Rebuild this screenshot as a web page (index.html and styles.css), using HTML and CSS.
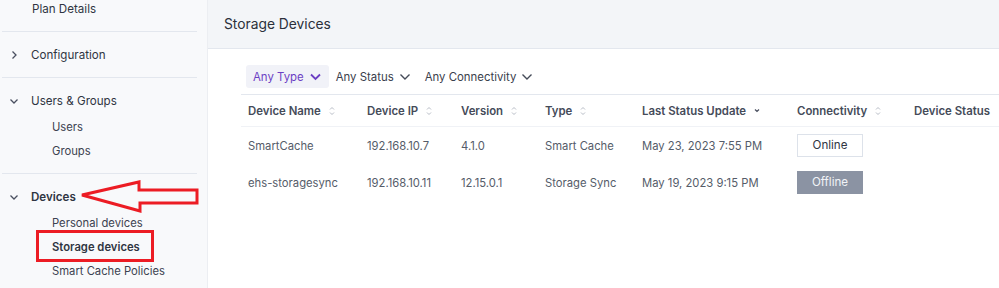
FILE: index.html
```html
<!DOCTYPE html>
<html lang="en">
<head>
    <meta charset="UTF-8">
    <title>Storage Devices</title>
    <link rel="stylesheet" href="styles.css">
</head>
<body>
    <aside class="sidebar">
        <div class="section first">
            <div class="item">Plan Details</div>
        </div>
        <div class="section">
            <div class="heading">
                <svg class="caret" viewBox="0 0 10 10"><path d="M3.5 1.5 7 5 3.5 8.5" /></svg>
                Configuration
            </div>
        </div>
        <div class="section">
            <div class="heading">
                <svg class="caret" viewBox="0 0 10 10"><path d="M1.5 3.5 5 7 8.5 3.5" /></svg>
                Users &amp; Groups
            </div>
            <div class="sub">Users</div>
            <div class="sub">Groups</div>
        </div>
        <div class="section last">
            <div class="heading strong">
                <svg class="caret" viewBox="0 0 10 10"><path d="M1.5 3.5 5 7 8.5 3.5" /></svg>
                Devices
            </div>
            <div class="sub">Personal devices</div>
            <div class="sub strong">Storage devices</div>
            <div class="sub">Smart Cache Policies</div>
        </div>
    </aside>

    <main class="main">
        <header class="page-header">
            <h1>Storage Devices</h1>
        </header>

        <div class="filters">
            <button class="filter active">Any Type
                <svg class="chev" viewBox="0 0 12 8"><path d="M1.5 1.5 6 6 10.5 1.5" /></svg>
            </button>
            <button class="filter">Any Status
                <svg class="chev" viewBox="0 0 12 8"><path d="M1.5 1.5 6 6 10.5 1.5" /></svg>
            </button>
            <button class="filter">Any Connectivity
                <svg class="chev" viewBox="0 0 12 8"><path d="M1.5 1.5 6 6 10.5 1.5" /></svg>
            </button>
        </div>

        <div class="table">
            <div class="row head">
                <div class="cell">Device Name <svg class="sort" viewBox="0 0 6 10"><path d="M1 3.5 3 1.5 5 3.5M1 6.5 3 8.5 5 6.5" /></svg></div>
                <div class="cell">Device IP <svg class="sort" viewBox="0 0 6 10"><path d="M1 3.5 3 1.5 5 3.5M1 6.5 3 8.5 5 6.5" /></svg></div>
                <div class="cell">Version <svg class="sort" viewBox="0 0 6 10"><path d="M1 3.5 3 1.5 5 3.5M1 6.5 3 8.5 5 6.5" /></svg></div>
                <div class="cell">Type <svg class="sort" viewBox="0 0 6 10"><path d="M1 3.5 3 1.5 5 3.5M1 6.5 3 8.5 5 6.5" /></svg></div>
                <div class="cell">Last Status Update <svg class="sort on" viewBox="0 0 6 10"><path d="M1 3.5 3 5.5 5 3.5" /></svg></div>
                <div class="cell">Connectivity <svg class="sort" viewBox="0 0 6 10"><path d="M1 3.5 3 1.5 5 3.5M1 6.5 3 8.5 5 6.5" /></svg></div>
                <div class="cell">Device Status</div>
            </div>
            <div class="row">
                <div class="cell">SmartCache</div>
                <div class="cell">192.168.10.7</div>
                <div class="cell">4.1.0</div>
                <div class="cell">Smart Cache</div>
                <div class="cell">May 23, 2023 7:55 PM</div>
                <div class="cell"><span class="badge online">Online</span></div>
                <div class="cell"></div>
            </div>
            <div class="row">
                <div class="cell">ehs-storagesync</div>
                <div class="cell">192.168.10.11</div>
                <div class="cell">12.15.0.1</div>
                <div class="cell">Storage Sync</div>
                <div class="cell">May 19, 2023 9:15 PM</div>
                <div class="cell"><span class="badge offline">Offline</span></div>
                <div class="cell"></div>
            </div>
        </div>
    </main>

    <!-- annotation drawn over the screenshot -->
    <svg class="markup" width="999" height="288" viewBox="0 0 999 288">
        <polygon points="82,195 139,182 139,190 197,190 197,203 140,203 140,211" />
        <rect x="37.5" y="231.5" width="115" height="29" />
    </svg>
</body>
</html>
```

FILE: styles.css
```css
:root {
    --side-bg: #f8f9fb;
    --head-bg: #f3f5f8;
    --line: #e3e7ee;
    --text: #2f3542;
    --muted: #555c69;
    --purple: #6c3fc4;
    --mark: #ec1c24;
}

* {
    margin: 0;
    padding: 0;
    box-sizing: border-box;
}

body {
    font-family: Inter, "Noto Sans", sans-serif;
    font-size: 11.25px;
    color: var(--text);
    background: #fff;
    display: flex;
    width: 999px;
    height: 288px;
    overflow: hidden;
}

/* sidebar */

.sidebar {
    width: 208px;
    flex-shrink: 0;
    background: var(--side-bg);
    border-right: 1px solid #eceef2;
    padding-right: 10px;
}

.section {
    margin-left: 2px;
    padding: 11px 0 10px;
    border-bottom: 1px solid var(--line);
}

.section.first {
    padding: 0 0 13px;
}

.section.last {
    border-bottom: none;
}

.item {
    line-height: 18px;
    padding-left: 30px;
    font-size: 11.6px;
}

.heading {
    display: flex;
    align-items: center;
    height: 24px;
    font-size: 11.6px;
    padding-left: 7px;
}

.heading.strong {
    font-weight: 600;
}

.caret {
    width: 10px;
    height: 10px;
    margin-right: 12px;
    fill: none;
    stroke: #4a5060;
    stroke-width: 1.3;
}

.sub {
    line-height: 24px;
    padding-left: 50px;
    color: #3c4250;
}

.heading + .sub {
    margin-top: 2px;
}

.sub.strong {
    font-weight: 600;
    color: var(--text);
}

/* main area */

.main {
    flex: 1;
    display: flex;
    flex-direction: column;
}

.page-header {
    height: 49px;
    background: var(--head-bg);
    border-bottom: 1px solid var(--line);
    display: flex;
    align-items: center;
    padding-left: 16px;
}

.page-header h1 {
    font-size: 13.8px;
    font-weight: 400;
    color: #2b303b;
    margin-top: -1px;
}

.filters {
    display: flex;
    margin: 16px 0 6px 38px;
}

.filter {
    font-family: inherit;
    font-size: 11.4px;
    color: #3a404c;
    background: none;
    border: none;
    border-radius: 3px;
    height: 23px;
    padding: 0 7px;
    display: flex;
    align-items: center;
    gap: 5px;
}

.filter.active {
    background: #f1f2f8;
    color: var(--purple);
}

.chev {
    width: 12px;
    height: 8px;
    fill: none;
    stroke: #454b58;
    stroke-width: 1.4;
}

.filter.active .chev {
    width: 13px;
    stroke: var(--purple);
    stroke-width: 1.8;
}

/* table */

.table {
    margin-left: 33px;
    border-top: 1px solid var(--line);
}

.row {
    display: grid;
    grid-template-columns: 119px 94px 84px 97px 155px 117px 1fr;
    height: 37px;
    align-items: center;
}

.row.head {
    height: 32px;
    border-bottom: 1px solid #f0f2f6;
    font-weight: 600;
    font-size: 11.4px;
}

.cell {
    padding-left: 7px;
    white-space: nowrap;
    display: flex;
    align-items: center;
    color: var(--muted);
}

.head .cell {
    color: #454b59;
}

.sort {
    width: 6px;
    height: 10px;
    margin-left: 8px;
    fill: none;
    stroke: #b7bcc6;
    stroke-width: 1;
}

.sort.on {
    stroke: #4a5060;
    stroke-width: 1.2;
}

.badge {
    display: inline-block;
    width: 66px;
    height: 23px;
    line-height: 21px;
    text-align: center;
    font-size: 11.6px;
}

.badge.online {
    border: 1px solid #dde2ea;
    background: #fff;
    color: #2f3542;
}

.badge.offline {
    background: #8b93a3;
    border: 1px solid #8b93a3;
    color: #f1f3f7;
}

/* red annotation */

.markup {
    position: absolute;
    left: 0;
    top: 0;
    pointer-events: none;
    fill: none;
    stroke: var(--mark);
    stroke-width: 3;
}
```
